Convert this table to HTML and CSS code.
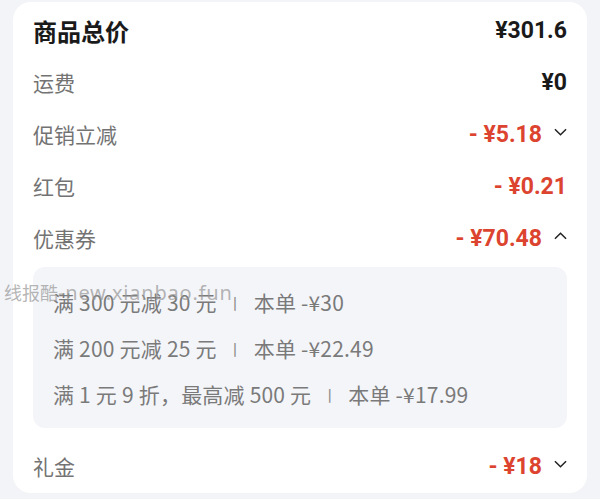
FILE: index.html
```html
<!DOCTYPE html>
<html lang="zh-CN">
<head>
    <meta charset="UTF-8">
    <meta name="viewport" content="width=device-width, initial-scale=1.0">
    <title>订单金额明细</title>
    <link rel="stylesheet" href="styles.css">
</head>
<body>
    <div class="card">
        <div class="row total">
            <span class="label">商品总价</span>
            <span class="value">¥301.6</span>
        </div>
        <div class="row">
            <span class="label">运费</span>
            <span class="value">¥0</span>
        </div>
        <div class="row">
            <span class="label">促销立减</span>
            <span class="value red">- ¥5.18</span>
            <svg class="chev" viewBox="0 0 14 8"><path d="M1 1l6 6 6-6"/></svg>
        </div>
        <div class="row">
            <span class="label">红包</span>
            <span class="value red">- ¥0.21</span>
        </div>
        <div class="row">
            <span class="label">优惠券</span>
            <span class="value red">- ¥70.48</span>
            <svg class="chev" viewBox="0 0 14 8"><path d="M1 7l6-6 6 6"/></svg>
        </div>

        <div class="coupons">
            <div class="coupon">满 300 元减 30 元 <span class="sep">丨</span> 本单 -¥30</div>
            <div class="coupon">满 200 元减 25 元 <span class="sep">丨</span> 本单 -¥22.49</div>
            <div class="coupon">满 1 元 9 折，最高减 500 元 <span class="sep">丨</span> 本单 -¥17.99</div>
        </div>

        <div class="row gift">
            <span class="label">礼金</span>
            <span class="value red">- ¥18</span>
            <svg class="chev" viewBox="0 0 14 8"><path d="M1 1l6 6 6-6"/></svg>
        </div>
    </div>

    <div class="watermark">线报酷<span class="wm-url">-new.xianbao.fun</span></div>
</body>
</html>
```

FILE: styles.css
```css
* {
    box-sizing: border-box;
}

body {
    margin: 0;
    background: #f3f4f8;
    font-family: "Noto Sans CJK SC", "Noto Sans", sans-serif;
    position: relative;
}

.card {
    margin: 2px 13px 0;
    width: 574px;
    padding: 2px 20px 1px;
    background: #fff;
    border-radius: 18px;
}

.row {
    height: 52px;
    display: flex;
    align-items: center;
}

.label {
    flex: 1;
    font-size: 21px;
    color: #737373;
}

.value {
    font-family: Roboto, "Noto Sans", sans-serif;
    font-weight: 700;
    font-size: 23px;
    color: #1a1a1a;
}

.total .label {
    font-size: 24px;
    font-weight: 700;
    color: #1a1a1a;
}

.value.red {
    color: #dc4430;
    white-space: pre;
}

.chev {
    width: 13px;
    height: 8px;
    margin-left: 12px;
    margin-top: -4px;
    fill: none;
    stroke: #222;
    stroke-width: 1.6;
}

.coupons {
    margin-top: 3px;
    padding: 12px 20px 11px;
    background: #f4f5f9;
    border-radius: 12px;
}

.coupon {
    height: 46px;
    display: flex;
    align-items: center;
    font-family: "Noto Sans CJK SC", sans-serif;
    font-size: 21px;
    letter-spacing: 0.2px;
    color: #7a7a7a;
    white-space: pre;
}

.sep {
    color: #8a8a8a;
    font-size: 15px;
    margin: 0 6px 0 6px;
}

.gift {
    margin-top: 12px;
}

.watermark {
    position: absolute;
    left: 4px;
    top: 279px;
    font-size: 18px;
    color: rgba(150, 150, 150, 0.7);
}

.wm-url {
    font-family: "Noto Sans", sans-serif;
    font-size: 20px;
    letter-spacing: 0.8px;
}
```
